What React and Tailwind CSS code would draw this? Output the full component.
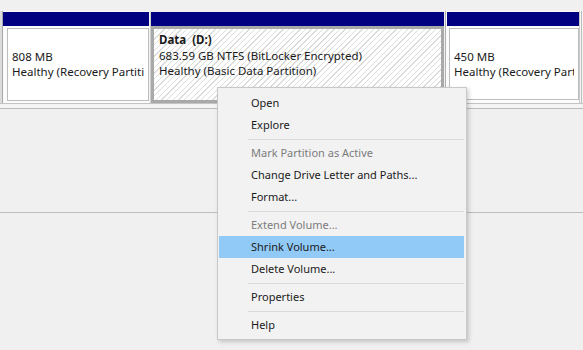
import React from 'react';

const items = [
  { label: 'Open' },
  { label: 'Explore' },
  { sep: true },
  { label: 'Mark Partition as Active', disabled: true },
  { label: 'Change Drive Letter and Paths...' },
  { label: 'Format...' },
  { sep: true },
  { label: 'Extend Volume...', disabled: true },
  { label: 'Shrink Volume...', active: true },
  { label: 'Delete Volume...' },
  { sep: true },
  { label: 'Properties' },
  { sep: true },
  { label: 'Help' },
];

const ContextMenu = () => (
  <div className="absolute left-[217px] top-[87px] w-[250px] h-[253px] bg-[#f2f2f2] border border-[#c8c8c8] shadow-[2px_2px_4px_rgba(0,0,0,0.18)] pt-[4px] pl-[1px] pr-[2px] text-[11px]">
    {items.map((it, i) =>
      it.sep ? (
        <div key={i} className="h-[6px] flex items-center pl-[29px]">
          <div className="h-px w-full bg-[#d9d9d9]" />
        </div>
      ) : (
        <div
          key={i}
          className={
            'h-[22px] flex items-center pl-[32px] whitespace-nowrap ' +
            (it.active ? 'bg-[#91c9f7] ' : '') +
            (it.disabled ? 'text-[#7c7c7c]' : 'text-[#1a1a1a]')
          }
        >
          {it.label}
        </div>
      )
    )}
  </div>
);

const PartitionText = ({ lines, bold }) => (
  <div className="leading-[15.5px] whitespace-nowrap overflow-hidden">
    <div className="font-bold h-[15.5px]">{bold}</div>
    {lines.map((l) => (
      <div key={l}>{l}</div>
    ))}
  </div>
);

export default function App() {
  return (
    <div className="relative w-[583px] h-[350px] overflow-hidden bg-[#f0f0f0] font-['Noto_Sans',sans-serif] text-[11.5px] text-[#1a1a1a]">
      {/* top strip */}
      <div className="h-[11px] bg-[#f0f0f0]" />

      {/* disk row */}
      <div className="flex h-[93px] border-b border-[#c4c4c4]">
        <div className="w-[2px] bg-[#dcdcdc]" />

        {/* recovery partition */}
        <div className="w-[147px] border-l border-[#a8a8a8] bg-[#fbfbfb] flex flex-col">
          <div className="h-[14px] mt-px bg-[#000080]" />
          <div className="mt-[2px] ml-[4px] h-[73px] bg-white border border-[#bdbdbd] pl-[4px] pr-[4px] pt-[4px]">
            <PartitionText lines={['808 MB', 'Healthy (Recovery Partition)']} />
          </div>
        </div>

        <div className="w-[2px] bg-[#f4f4f8] border-r border-[#cfcfcf]" />

        {/* data partition */}
        <div className="w-[294px] flex flex-col pr-px">
          <div className="h-[14px] mt-px bg-[#000080]" />
          <div className="h-[77px] border-[3px] border-[#a9a9a9] bg-[repeating-linear-gradient(135deg,#ffffff_0px,#ffffff_3px,#dcdcdc_3px,#dcdcdc_4px)] pl-[5px] pt-[3px]">
            <PartitionText
              bold={'Data\u00a0 (D:)'}
              lines={['683.59 GB NTFS (BitLocker Encrypted)', 'Healthy (Basic Data Partition)']}
            />
          </div>
        </div>

        {/* recovery partition 2 */}
        <div className="w-[134px] border-l border-[#b0b0b0] bg-[#fbfbfb] flex flex-col pl-px">
          <div className="h-[14px] mt-px bg-[#000080]" />
          <div className="mt-[2px] ml-[2px] h-[72px] bg-white border border-[#bdbdbd] pl-[4px] pr-[4px] pt-[4px]">
            <PartitionText lines={['450 MB', 'Healthy (Recovery Partition)']} />
          </div>
        </div>

        <div className="flex-1 border-l border-[#c8c8c8] bg-[#f6f6f6] flex">
          <div className="w-[1px] ml-[1px] bg-[#bdbdbd]" />
        </div>
      </div>

      <div className="h-[5px] border-b border-[#bcbcbc] bg-[#f4f4f4]" />
      <div className="h-[104px] border-b border-[#bdbdbd]" />

      <ContextMenu />
    </div>
  );
}
